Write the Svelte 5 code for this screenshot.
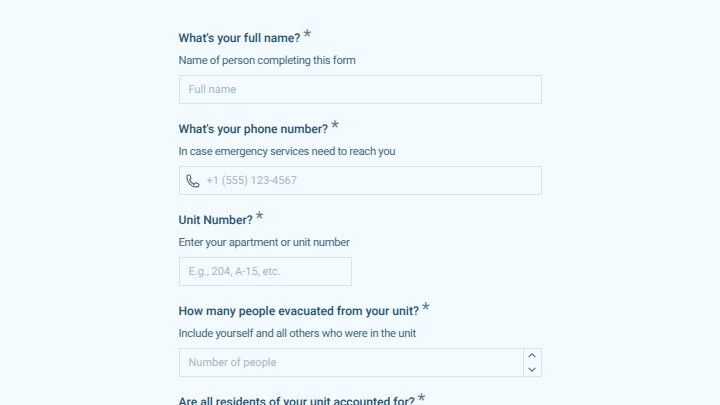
<script>
  const fields = [
    { label: "What's your full name?", help: 'Name of person completing this form', placeholder: 'Full name', kind: 'text' },
    { label: "What's your phone number?", help: 'In case emergency services need to reach you', placeholder: '+1 (555) 123-4567', kind: 'phone' },
    { label: 'Unit Number?', help: 'Enter your apartment or unit number', placeholder: 'E.g., 204, A-15, etc.', kind: 'short' },
    { label: 'How many people evacuated from your unit?', help: 'Include yourself and all others who were in the unit', placeholder: 'Number of people', kind: 'number' }
  ];
</script>

<main class="page">
  <form class="form">
    {#each fields as field}
      <div class="field">
        <div class="label">{field.label} <span class="req">*</span></div>
        <div class="help">{field.help}</div>
        <div class="input {field.kind}">
          {#if field.kind === 'phone'}
            <svg class="phone-icon" viewBox="0 0 24 24" width="16" height="16" fill="none" stroke="currentColor" stroke-width="1.8" stroke-linecap="round" stroke-linejoin="round">
              <path d="M3 5.500c0-1.400 1.100-2.500 2.500-2.500h1.200c.6 0 1.100.4 1.200 1l.9 3.600c.1.500-.1 1-.5 1.200l-1.600 1.200c1.400 3.100 3.900 5.600 7 7l1.200-1.600c.3-.4.8-.6 1.200-.5l3.600.9c.6.1 1 .6 1 1.200v1.200c0 1.400-1.100 2.500-2.500 2.500h-1.500C9.500 20.800 3 14.300 3 7z" />
            </svg>
          {/if}
          <span class="placeholder">{field.placeholder}</span>
          {#if field.kind === 'number'}
            <div class="stepper">
              <svg viewBox="0 0 12 8" width="10" height="7" fill="none" stroke="currentColor" stroke-width="1.400"><path d="M2 6l4-4 4 4" /></svg>
              <svg viewBox="0 0 12 8" width="10" height="7" fill="none" stroke="currentColor" stroke-width="1.400"><path d="M2 2l4 4 4-4" /></svg>
            </div>
          {/if}
        </div>
      </div>
    {/each}
    <div class="field">
      <div class="label">Are all residents of your unit accounted for? <span class="req">*</span></div>
    </div>
  </form>
</main>

<style>
  :global(body) {
    margin: 0;
    background: #f3fbff;
    overflow: hidden;
  }

  .page {
    height: 405px;
    overflow: hidden;
    display: flex;
    justify-content: center;
    font-family: Roboto, "Liberation Sans", sans-serif;
    text-rendering: geometricPrecision;
    color: #2f5870;
  }

  .form {
    width: 363px;
    padding-top: 26px;
    display: flex;
    flex-direction: column;
    gap: 13px;
    flex-shrink: 0;
  }

  .field {
    display: flex;
    flex-direction: column;
  }

  .label {
    height: 24px;
    line-height: 24px;
    font-size: 12.1px;
    font-weight: 500;
    color: #2a566f;
    white-space: nowrap;
  }

  .req {
    font-size: 18px;
    font-weight: 400;
    color: #5c8294;
    line-height: 16px;
  }

  .help {
    margin-top: 1px;
    height: 20px;
    line-height: 20px;
    font-size: 11.25px;
    letter-spacing: -0.29px;
    color: #426a7e;
  }

  .input {
    margin-top: 4px;
    box-sizing: border-box;
    height: 29px;
    border: 1px solid #d3e7ea;
    display: flex;
    align-items: center;
    padding-left: 9px;
    font-size: 11px;
    position: relative;
  }

  .input.short {
    width: 173px;
  }

  .input.phone {
    padding-left: 5px;
  }

  .phone-icon {
    color: #4a7085;
    margin-right: 6px;
  }

  .placeholder {
    color: #a3b8c2;
  }

  .stepper {
    margin-left: auto;
    width: 17px;
    height: 100%;
    border-left: 1px solid #d3e7ea;
    display: flex;
    flex-direction: column;
    align-items: center;
    justify-content: space-around;
    color: #4b7084;
  }
</style>
